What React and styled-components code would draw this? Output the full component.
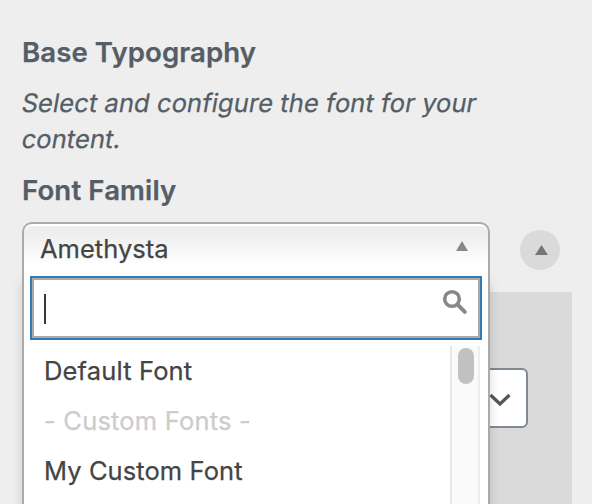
import React from 'react';
import styled, { createGlobalStyle } from 'styled-components';

const GlobalStyle = createGlobalStyle`
  * { box-sizing: border-box; }
  body {
    margin: 0;
    background: #eee;
    font-family: Inter, "Liberation Sans", sans-serif;
    font-weight: 400;
    -webkit-text-stroke: 0.25px;
    color: #444;
    overflow: hidden;
  }
`;

const Page = styled.main`
  height: 504px;
  padding: 34px 20px 0 22px;
  overflow: hidden;
  display: flex;
  flex-direction: column;
`;

const Title = styled.h3`
  margin: 0;
  color: #555d66;
  font-size: 27.6px;
  font-weight: 600;
  line-height: 36px;
  letter-spacing: ${(p) => p.$tracking};
`;

const Description = styled.p`
  margin: 15px 0;
  color: #555d66;
  font-size: 25.5px;
  line-height: 36px;
`;

const SlantedLine = styled.span`
  display: block;
  width: max-content;
  white-space: nowrap;
  transform: skewX(-10deg);
  letter-spacing: ${(p) => p.$tracking};
`;

const FontRow = styled.div`
  display: flex;
  align-items: flex-start;
  justify-content: space-between;
  height: 70px;
  margin-top: 14px;
  padding-right: 12px;
`;

const Chosen = styled.div`
  position: relative;
  z-index: 1;
  width: 468px;
`;

const ChosenValue = styled.div`
  display: flex;
  align-items: center;
  justify-content: space-between;
  height: 52px;
  padding: 0 20px 0 16px;
  border: 2px solid #aaa;
  border-bottom: 0;
  border-radius: 10px 10px 0 0;
  background: linear-gradient(#eee 20%, #fff 80%);
  box-shadow: inset 0 2px 0 #fff;
  font-size: 25.5px;
  line-height: 50px;
  letter-spacing: ${(p) => p.$tracking};
`;

const ChosenDrop = styled.div`
  position: absolute;
  top: 52px;
  left: 0;
  width: 468px;
  height: 480px;
  padding: 2px 6px;
  border: 2px solid #aaa;
  border-top: 0;
  background: #fff;
  box-shadow: 0 8px 10px rgba(0, 0, 0, 0.15);
`;

const SearchBox = styled.div`
  display: flex;
  align-items: flex-start;
  justify-content: space-between;
  height: 60px;
  margin: 2px;
  padding: 14px 10px 0;
  border: 2px solid #aaa;
  outline: 2px solid #327ab7;
  background: #fff;
`;

const Caret = styled.span`
  width: 2px;
  height: 30px;
  background: #32373c;
`;

const SearchIcon = styled.svg`
  width: 26px;
  height: 26px;
  margin: -5px 0 0 0;
`;

const Results = styled.div`
  display: flex;
  justify-content: space-between;
  height: 400px;
  margin: 8px 2px 0 0;
`;

const OptionList = styled.ul`
  list-style: none;
  margin: 0;
  padding: 0 0 0 14px;
`;

const Option = styled.li`
  height: 50px;
  color: ${(p) => (p.$disabled ? '#ccc' : '#444')};
  font-size: 25.5px;
  line-height: 50px;
  letter-spacing: ${(p) => p.$tracking};
  white-space: nowrap;
`;

const ScrollTrack = styled.div`
  width: 30px;
  padding: 2px 4px 0 6px;
  border-left: 2px solid #e8e8e8;
  border-right: 2px solid #ededed;
  background: #fafafa;
`;

const ScrollThumb = styled.div`
  width: 16px;
  height: 36px;
  border-radius: 8px;
  background: #c1c1c1;
`;

const ToggleButton = styled.button`
  display: flex;
  align-items: center;
  justify-content: center;
  width: 40px;
  height: 40px;
  margin-top: 8px;
  padding: 0 0 0 3px;
  border: 0;
  border-radius: 50%;
  background: #dadada;
`;

const Triangle = styled.svg`
  width: ${(p) => p.$width}px;
  height: 10px;
  margin-top: ${(p) => p.$offset || 0}px;
  fill: ${(p) => p.$color};
`;

const SettingsPanel = styled.section`
  height: 212px;
  padding: 76px 44px 0 20px;
  background: #dadada;
`;

const VariantSelect = styled.div`
  display: flex;
  align-items: center;
  justify-content: flex-end;
  height: 60px;
  padding: 4px 15px 0 0;
  border: 2px solid #7e8993;
  border-radius: 6px;
  background: #fff;
`;

const Chevron = styled.svg`
  width: 22px;
  height: 14px;
`;

const options = [
  { label: 'Default Font', tracking: '0.15px' },
  { label: '- Custom Fonts -', tracking: '0.2px', disabled: true },
  { label: 'My Custom Font', tracking: '0.08px' },
];

export default function App() {
  return (
    <>
      <GlobalStyle />
      <Page>
        <Title $tracking="0.08px">Base Typography</Title>
        <Description>
          <SlantedLine $tracking="0.08px">Select and configure the font for your</SlantedLine>
          <SlantedLine $tracking="0.08px">content.</SlantedLine>
        </Description>
        <Title $tracking="0.12px">Font Family</Title>
        <FontRow>
          <Chosen>
            <ChosenValue $tracking="0.02px">
              <span>Amethysta</span>
              <Triangle $width={12} $offset={-6} $color="#888" viewBox="0 0 12 10">
                <path d="M6 0 12 10H0Z" />
              </Triangle>
            </ChosenValue>
            <ChosenDrop>
              <SearchBox>
                <Caret />
                <SearchIcon viewBox="0 0 26 26" fill="none" stroke="#888">
                  <circle cx="10" cy="10" r="7.3" strokeWidth="3.6" />
                  <path d="m15.5 15.5 7.3 7.3" strokeWidth="4" strokeLinecap="round" />
                </SearchIcon>
              </SearchBox>
              <Results>
                <OptionList>
                  {options.map((o) => (
                    <Option key={o.label} $tracking={o.tracking} $disabled={o.disabled}>
                      {o.label}
                    </Option>
                  ))}
                </OptionList>
                <ScrollTrack>
                  <ScrollThumb />
                </ScrollTrack>
              </Results>
            </ChosenDrop>
          </Chosen>
          <ToggleButton aria-label="Collapse">
            <Triangle $width={13} $color="#72777c" viewBox="0 0 13 10">
              <path d="M6.5 0 13 10H0Z" />
            </Triangle>
          </ToggleButton>
        </FontRow>
        <SettingsPanel>
          <VariantSelect>
            <Chevron viewBox="0 0 22 14" fill="none" stroke="#555" strokeWidth="3.2">
              <path d="m1.5 2 9.5 9 9.5-9" />
            </Chevron>
          </VariantSelect>
        </SettingsPanel>
      </Page>
    </>
  );
}
